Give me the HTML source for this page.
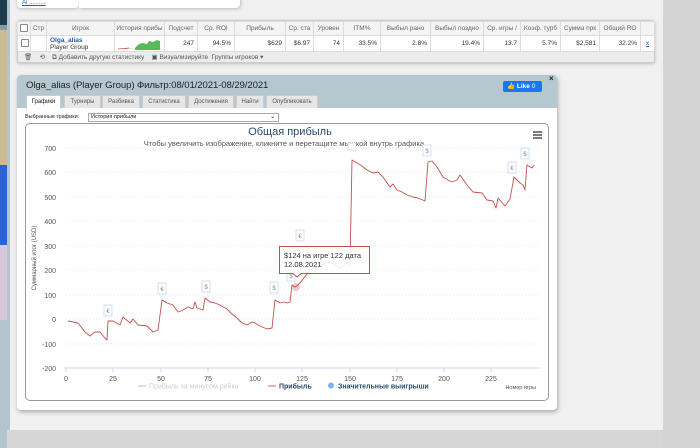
<!DOCTYPE html>
<html><head><meta charset="utf-8"><style>
*{margin:0;padding:0;box-sizing:border-box}
body{width:700px;height:448px;overflow:hidden;background:#f0f0f0;font-family:"Liberation Sans","DejaVu Sans",sans-serif;position:relative;font-size:7px;color:#333}
.a{position:absolute}
table{border-collapse:collapse;font-size:6.5px}
td{border:1px solid #ddd;height:15px;padding:0 3px;text-align:right;white-space:nowrap;overflow:hidden}
th{border:1px solid #ddd;height:14px;font-weight:normal;color:#666;background:#f4f4f4;white-space:nowrap;overflow:hidden;text-align:center}
.cb{display:inline-block;width:8px;height:8px;border:1px solid #888;background:#fff;border-radius:1px}
.tab{position:absolute;top:95px;height:13px;background:#e6e6e6;border:1px solid #ccc;border-bottom:none;font-size:6px;color:#555;text-align:center;line-height:12px}
</style></head><body>
<div class="a" style="left:0;top:0;width:7px;height:25px;background:#1d3c4c"></div>
<div class="a" style="left:0;top:25px;width:7px;height:5px;background:#8a9aa0"></div>
<div class="a" style="left:0;top:30px;width:7px;height:135px;background:#c9bc90"></div>
<div class="a" style="left:0;top:165px;width:7px;height:80px;background:#2c62d8"></div>
<div class="a" style="left:0;top:245px;width:7px;height:75px;background:#d8c8d8"></div>
<div class="a" style="left:0;top:320px;width:7px;height:110px;background:#b2c5cd"></div>
<div class="a" style="left:7px;top:0;width:3px;height:430px;background:#b2c5cd"></div>
<div class="a" style="left:663px;top:0;width:37px;height:448px;background:#d4d4d4"></div>
<div class="a" style="left:0;top:430px;width:663px;height:18px;background:#d6d6d6"></div>
<div class="a" style="left:0;top:430px;width:7px;height:18px;background:#b2c5cd"></div>
<div class="a" style="left:17px;top:-4px;width:62px;height:12px;background:#fff;box-shadow:0 1px 3px #bbb;border-radius:0 0 4px 4px"></div>
<div class="a" style="left:79px;top:-4px;width:161px;height:12px;background:#fff;box-shadow:1px 1px 3px #bbb;border-radius:0 0 4px 0"></div>
<div class="a" style="left:22px;top:0;font-size:6px;color:#2a5db0;text-decoration:underline">Ai ..........</div>
<div class="a" style="left:17px;top:20px;width:638px;height:43px;background:#ececec;border:1px solid #ccc;border-radius:3px;box-shadow:0 1px 3px #bbb"></div>
<table class="a" style="left:17px;top:21px;width:637px;background:#fff;table-layout:fixed">
<colgroup><col style="width:13px"><col style="width:16px"><col style="width:68px"><col style="width:50px"><col style="width:33px"><col style="width:37px"><col style="width:51px"><col style="width:28px"><col style="width:30px"><col style="width:37px"><col style="width:50px"><col style="width:53px"><col style="width:37px"><col style="width:40px"><col style="width:39px"><col style="width:41px"><col style="width:14px"></colgroup>
<tr><th><span class="cb"></span></th><th>Стр</th><th>Игрок</th><th>История прибы</th><th>Подсчет</th><th>Ср. ROI</th><th>Прибыль</th><th>Ср. ста</th><th>Уровен</th><th>ITM%</th><th>Выбыл рано</th><th>Выбыл поздно</th><th>Ср. игры /</th><th>Коэф. турб</th><th>Сумма прк</th><th>Общий RO</th><th></th></tr>
<tr><td style="text-align:center"><span class="cb"></span></td><td></td><td style="text-align:left;line-height:7px;padding-top:1px"><b style="color:#1e5aa8">Olga_alias</b><br>Player Group</td><td style="padding:0;position:relative"><svg width="50" height="15" style="position:absolute;left:0;top:0"><path d="M3 13 L12 13 L14 12 L20 12 L22 10 L24 8 L28 7 L32 8 L34 5 L38 6 L42 4 L45 5 L45 14 L20 14 L20 12 Z" fill="#5cb85c"/><path d="M3 13 L14 12" stroke="#d9534f" stroke-width="0.8"/></svg></td><td>247</td><td>94.5%</td><td>$629</td><td>$6.97</td><td>74</td><td>33.5%</td><td>2.8%</td><td>19.4%</td><td>13.7</td><td>5.7%</td><td>$2,581</td><td>32.2%</td><td style="text-align:center;color:#2a5db0;text-decoration:underline">x</td></tr>
</table>
<div class="a" style="left:24px;top:53px;font-size:6.5px;color:#555;white-space:nowrap">🗑&nbsp;&nbsp;&nbsp;&nbsp;⟲&nbsp;&nbsp;&nbsp;&nbsp;⧉ Добавить другую статистику&nbsp;&nbsp;&nbsp;&nbsp;▣ Визуализируйте&nbsp;&nbsp;Группы игроков ▾</div>
<div class="a" style="left:17px;top:75px;width:540px;height:335px;background:#fff;border-radius:4px;box-shadow:1px 2px 4px #aaa"></div>
<div class="a" style="left:17px;top:75px;width:540px;height:33px;background:#b5c8d0;border-radius:4px 4px 0 0"></div>
<div class="a" style="left:26px;top:80px;font-size:9.6px;color:#222;letter-spacing:-0.1px">Olga_alias (Player Group) Фильтр:08/01/2021-08/29/2021</div>
<div class="a" style="left:503px;top:81px;width:39px;height:11px;background:#1877f2;border-radius:2px;color:#fff;font-size:6.5px;font-weight:bold;line-height:11px;padding-left:4px">👍 Like <span style="font-weight:normal">0</span></div>
<div class="a" style="left:549px;top:74px;font-size:8px;font-weight:bold;color:#222">×</div>
<div class="tab" style="left:26px;width:35px;background:#fff;color:#222;height:14px">Графики</div>
<div class="tab" style="left:64px;width:37px">Турниры</div>
<div class="tab" style="left:102px;width:38px">Разбивка</div>
<div class="tab" style="left:142px;width:44px">Статистика</div>
<div class="tab" style="left:188px;width:46px">Достижения</div>
<div class="tab" style="left:236px;width:28px">Найти</div>
<div class="tab" style="left:266px;width:52px">Опубликовать</div>
<div class="a" style="left:25px;top:114px;font-size:5.5px;color:#222">Выбранные графики:</div>
<div class="a" style="left:88px;top:113px;width:191px;height:9px;border:1px solid #aaa;font-size:5.5px;line-height:7px;padding-left:2px;color:#222">История прибыли<span style="position:absolute;right:3px;font-weight:bold">⌄</span></div>
<div class="a" style="left:25px;top:123px;width:524px;height:278px;border:1px solid #999;border-radius:5px;background:#fff"></div>
<svg class="a" style="left:0;top:0" width="700" height="448" font-family="Liberation Sans, DejaVu Sans, sans-serif">
<g stroke="#ddd" stroke-dasharray="1,2" stroke-width="0.7">
<line x1="66" x2="540" y1="148" y2="148"/><line x1="66" x2="540" y1="172" y2="172"/><line x1="66" x2="540" y1="197" y2="197"/><line x1="66" x2="540" y1="221" y2="221"/><line x1="66" x2="540" y1="246" y2="246"/><line x1="66" x2="540" y1="270" y2="270"/><line x1="66" x2="540" y1="295" y2="295"/><line x1="66" x2="540" y1="319" y2="319"/><line x1="66" x2="540" y1="344" y2="344"/>
</g>
<line x1="64" x2="540" y1="368" y2="368" stroke="#ccd6eb" stroke-width="1"/>
<g stroke="#ccd6eb"><line x1="66" x2="66" y1="368" y2="372"/><line x1="113" x2="113" y1="368" y2="372"/><line x1="161" x2="161" y1="368" y2="372"/><line x1="208" x2="208" y1="368" y2="372"/><line x1="255" x2="255" y1="368" y2="372"/><line x1="302" x2="302" y1="368" y2="372"/><line x1="350" x2="350" y1="368" y2="372"/><line x1="397" x2="397" y1="368" y2="372"/><line x1="444" x2="444" y1="368" y2="372"/><line x1="491" x2="491" y1="368" y2="372"/></g>
<g font-size="7" fill="#555" text-anchor="end">
<text x="56" y="151">700</text><text x="56" y="175">600</text><text x="56" y="200">500</text><text x="56" y="224">400</text><text x="56" y="249">300</text><text x="56" y="273">200</text><text x="56" y="298">100</text><text x="56" y="322">0</text><text x="56" y="347">-100</text><text x="56" y="371">-200</text>
</g>
<g font-size="7" fill="#555" text-anchor="middle">
<text x="66" y="381">0</text><text x="113" y="381">25</text><text x="161" y="381">50</text><text x="208" y="381">75</text><text x="255" y="381">100</text><text x="302" y="381">125</text><text x="350" y="381">150</text><text x="397" y="381">175</text><text x="444" y="381">200</text><text x="491" y="381">225</text>
</g>
<text transform="translate(36,258) rotate(-90)" font-size="6" fill="#555" text-anchor="middle">Суммарный итог (USD)</text>
<text x="290" y="135" font-size="11" fill="#274b6d" text-anchor="middle">Общая прибыль</text>
<text x="285" y="146" font-size="7.5" fill="#555" text-anchor="middle">Чтобы увеличить изображение, кликните и перетащите мышкой внутрь графика.</text>
<g stroke="#333" stroke-width="1.3"><line x1="533" x2="542" y1="132" y2="132"/><line x1="533" x2="542" y1="135" y2="135"/><line x1="533" x2="542" y1="138" y2="138"/></g>
<polyline fill="none" stroke="#c0504d" stroke-width="0.9" stroke-linejoin="round" points="68,321 73,322 78,323 85,332 90,336 95,332 100,332 105,338 107,340 108,321 113,321 120,325 123,317 130,323 133,319 138,325 147,326 153,332 158,330 162,300 167,303 173,305 178,312 183,310 188,307 193,309 195,302 197,308 203,310 205,298 210,302 215,303 220,305 227,309 232,314 237,318 242,323 247,325 252,322 255,323 260,326 267,329 272,328 275,300 280,303 284,302 287,303 290,302 292,285 295,287 298,285 300,283 310,270 320,265 330,262 340,268 348,262 350,265 352,160 357,163 362,166 367,170 373,173 378,172 383,177 390,187 393,184 397,190 402,192 407,195 413,197 418,198 425,201 428,162 432,161 437,167 443,177 448,180 452,182 457,180 460,175 467,185 473,192 482,193 487,200 493,201 496,208 498,198 505,206 510,199 514,177 520,183 523,185 525,190 527,165 532,168 534,165"/>
<circle cx="296" cy="287" r="4" fill="#c0504d" opacity="0.3"/>
<g font-size="6" fill="#888" text-anchor="middle">
<rect x="104" y="305" width="8" height="11" fill="#fff" stroke="#cfe0f5"/><text x="108" y="313">€</text>
<rect x="158" y="283" width="8" height="11" fill="#fff" stroke="#cfe0f5"/><text x="162" y="291">€</text>
<rect x="202" y="281" width="8" height="11" fill="#fff" stroke="#cfe0f5"/><text x="206" y="289">$</text>
<rect x="270" y="282" width="8" height="11" fill="#fff" stroke="#cfe0f5"/><text x="274" y="290">$</text>
<rect x="287" y="270" width="8" height="11" fill="#fff" stroke="#cfe0f5"/><text x="291" y="278">$</text>
<rect x="296" y="230" width="8" height="11" fill="#fff" stroke="#cfe0f5"/><text x="300" y="238">€</text>
<rect x="348" y="143" width="8" height="7" fill="#fff" stroke="#cfe0f5"/>
<rect x="423" y="145" width="8" height="11" fill="#fff" stroke="#cfe0f5"/><text x="427" y="153">$</text>
<rect x="508" y="162" width="8" height="11" fill="#fff" stroke="#cfe0f5"/><text x="512" y="170">€</text>
<rect x="521" y="148" width="8" height="11" fill="#fff" stroke="#cfe0f5"/><text x="525" y="156">$</text>
</g>
<path d="M279.5 246.5 H369.5 V273.5 H301 L297 277 L293 273.5 H279.5 Z" fill="#fff" fill-opacity="0.85" stroke="#c0504d" stroke-width="1"/>
<text x="284" y="258" font-size="7.5" fill="#333">$124 на игре 122 дата</text>
<text x="284" y="267" font-size="7.5" fill="#333">12.08.2021</text>
<line x1="138" x2="146" y1="386" y2="386" stroke="#ddd" stroke-width="2"/>
<text x="149" y="388.5" font-size="7" fill="#ccc">Прибыль за минусом рейка</text>
<line x1="268" x2="276" y1="386" y2="386" stroke="#e8b0b0" stroke-width="2"/>
<text x="279" y="388.5" font-size="7" fill="#274b6d" font-weight="bold">Прибыль</text>
<circle cx="331" cy="385.5" r="3" fill="#7cb5ec"/>
<text x="338" y="388.5" font-size="7" fill="#274b6d" font-weight="bold">Значительные выигрыши</text>
<text x="536" y="389" font-size="5.5" fill="#555" text-anchor="end">Номер игры</text>
</svg>
</body></html>
